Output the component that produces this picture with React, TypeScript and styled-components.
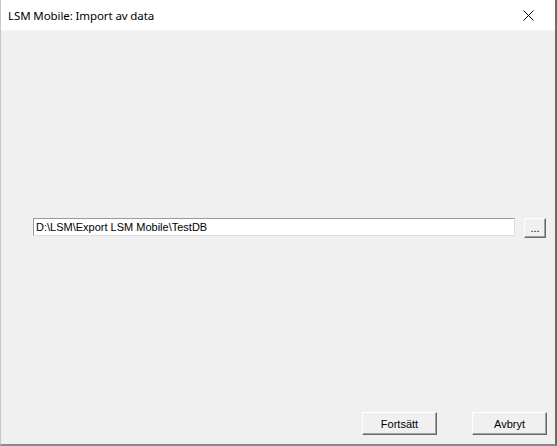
import React from "react";
import styled, { createGlobalStyle } from "styled-components";

const Global = createGlobalStyle`
  html, body { margin: 0; padding: 0; background: #f0f0f0; }
  * { box-sizing: border-box; }
`;

const Window = styled.div`
  width: 557px;
  height: 446px;
  display: flex;
  flex-direction: column;
  background: #f0f0f0;
  border-left: 1px solid #c8c8c8;
  border-right: 2px solid #6b6b6b;
  border-bottom: 2px solid #8a8a8a;
  overflow: hidden;
`;

const TitleBar = styled.div`
  height: 30px;
  flex: none;
  background: #ffffff;
  display: flex;
  align-items: center;
  justify-content: space-between;
  padding-left: 7px;
`;

const Title = styled.span`
  font-family: "Noto Sans", "Open Sans", sans-serif;
  font-size: 11.5px;
  color: #000;
  letter-spacing: -0.1px;
`;

const CloseButton = styled.div`
  width: 46px;
  height: 30px;
  display: flex;
  align-items: center;
  justify-content: center;
  padding-right: 8px;
`;

const Body = styled.div`
  flex: 1;
  display: flex;
  flex-direction: column;
  padding-top: 187px;
  border-top: 1px solid #f7f7f7;
`;

const PathRow = styled.div`
  display: flex;
  align-items: flex-start;
  padding-left: 32px;
  gap: 9px;
`;

const PathInput = styled.div`
  width: 482px;
  height: 18px;
  background: #fff;
  border: 1px solid;
  border-color: #9a9a9a #dcdcdc #dcdcdc #9a9a9a;
  font-family: "Liberation Sans", Arial, sans-serif;
  font-size: 11px;
  line-height: 16px;
  padding-left: 2px;
  color: #000;
  white-space: nowrap;
`;

const Button = styled.div<{ $w: number; $h: number }>`
  width: ${(p) => p.$w}px;
  height: ${(p) => p.$h}px;
  background: #f0f0f0;
  border-top: 1px solid #ffffff;
  border-left: 1px solid #ffffff;
  border-right: 1px solid #696969;
  border-bottom: 1px solid #696969;
  box-shadow: inset -1px -1px 0 #a0a0a0;
  display: flex;
  align-items: center;
  justify-content: center;
  font-family: "Liberation Sans", Arial, sans-serif;
  font-size: 11px;
  color: #000;
`;

const Footer = styled.div`
  margin-top: auto;
  display: flex;
  justify-content: flex-end;
  gap: 35px;
  padding-right: 8px;
  padding-bottom: 9px;
`;

export default function App() {
  return (
    <>
      <Global />
      <Window>
        <TitleBar>
          <Title>LSM Mobile: Import av data</Title>
          <CloseButton>
            <svg width="11" height="11" viewBox="0 0 11 11">
              <path d="M0.5 0.5 L10.5 10.5 M10.5 0.5 L0.5 10.5" stroke="#000" strokeWidth="1" fill="none" />
            </svg>
          </CloseButton>
        </TitleBar>
        <Body>
          <PathRow>
            <PathInput>D:\LSM\Export LSM Mobile\TestDB</PathInput>
            <Button $w={22} $h={20}>...</Button>
          </PathRow>
          <Footer>
            <Button $w={75} $h={23}>Fortsätt</Button>
            <Button $w={75} $h={23}>Avbryt</Button>
          </Footer>
        </Body>
      </Window>
    </>
  );
}
